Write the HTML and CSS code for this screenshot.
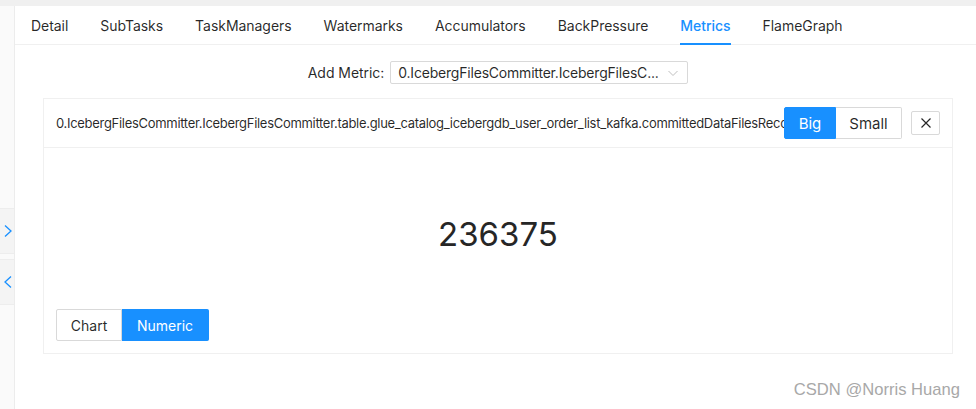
FILE: index.html
```html
<!DOCTYPE html>
<html>
<head>
<meta charset="utf-8">
<link rel="stylesheet" href="styles.css">
</head>
<body>
<div class="topbar"></div>
<div class="main">
  <aside class="sider">
    <div class="handle handle-first">
      <svg width="10" height="14" viewBox="0 0 10 14"><path d="M2 1.5 L8 7 L2 12.5" fill="none" stroke="#1890ff" stroke-width="1.3"/></svg>
    </div>
    <div class="handle">
      <svg width="10" height="14" viewBox="0 0 10 14"><path d="M8 1.5 L2 7 L8 12.5" fill="none" stroke="#1890ff" stroke-width="1.3"/></svg>
    </div>
  </aside>
  <section class="content">
    <nav class="tabs">
      <span class="tab">Detail</span>
      <span class="tab">SubTasks</span>
      <span class="tab">TaskManagers</span>
      <span class="tab">Watermarks</span>
      <span class="tab">Accumulators</span>
      <span class="tab">BackPressure</span>
      <span class="tab active">Metrics</span>
      <span class="tab">FlameGraph</span>
    </nav>
    <div class="panel">
      <div class="add-row">
        <span class="add-label">Add Metric:</span>
        <div class="select">
          <span class="select-value">0.IcebergFilesCommitter.IcebergFilesC...</span>
          <svg class="select-arrow" width="12" height="12" viewBox="0 0 12 12"><path d="M1.5 4 L6 8.5 L10.5 4" fill="none" stroke="#bfbfbf" stroke-width="1"/></svg>
        </div>
      </div>
      <div class="card">
        <div class="card-head">
          <div class="card-title">0.IcebergFilesCommitter.IcebergFilesCommitter.table.glue_catalog_icebergdb_user_order_list_kafka.committedDataFilesRecordCount</div>
          <div class="seg seg-lg">
            <span class="seg-btn on">Big</span>
            <span class="seg-btn">Small</span>
          </div>
          <button class="close-btn">
            <svg width="12" height="12" viewBox="0 0 12 12"><path d="M1.5 1.5 L10.5 10.5 M10.5 1.5 L1.5 10.5" stroke="#262626" stroke-width="1.2"/></svg>
          </button>
        </div>
        <div class="card-body">
          <div class="value">236375</div>
          <div class="seg">
            <span class="seg-btn wide-chart">Chart</span>
            <span class="seg-btn on wide-num">Numeric</span>
          </div>
        </div>
      </div>
    </div>
  </section>
</div>
<div class="watermark">CSDN @Norris Huang</div>
</body>
</html>
```

FILE: styles.css
```css
* { box-sizing: border-box; }
html, body { margin: 0; padding: 0; }
body {
  width: 976px;
  height: 409px;
  overflow: hidden;
  background: #fff;
  font-family: Inter, "Liberation Sans", sans-serif;
  color: rgba(0, 0, 0, 0.85);
  position: relative;
}
.topbar {
  height: 6px;
  background: #f0f0f0;
}
.main {
  display: flex;
  height: 403px;
}
.sider {
  width: 15px;
  flex: none;
  border-right: 1px solid #ececec;
  background: #fafafa;
  display: flex;
  flex-direction: column;
  gap: 5px;
}
.handle {
  width: 14px;
  height: 46px;
  background: #f4f4f4;
  border-top: 1px solid #ededed;
  border-bottom: 1px solid #ededed;
  display: flex;
  align-items: center;
  justify-content: flex-end;
  padding-right: 1px;
}
.handle-first { margin-top: 202px; }
.content {
  flex: 1;
  min-width: 0;
}
.tabs {
  display: flex;
  gap: 32px;
  padding-left: 16px;
  border-bottom: 1px solid #f0f0f0;
  height: 39px;
}
.tab {
  position: relative;
  font-size: 14px;
  line-height: 22px;
  padding-top: 9px;
  letter-spacing: -0.04px;
  color: rgba(0, 0, 0, 0.85);
  white-space: nowrap;
}
.tab.active {
  color: #1890ff;
  font-weight: 500;
}
.tab.active::after {
  content: "";
  position: absolute;
  left: 0;
  right: 0;
  bottom: -1px;
  height: 2px;
  background: #1890ff;
}
.panel {
  padding: 16px 23px 0 28px;
}
.add-row {
  display: flex;
  justify-content: center;
  align-items: center;
  gap: 6px;
  height: 23px;
}
.add-label {
  font-size: 14px;
  letter-spacing: -0.05px;
}
.select {
  width: 298px;
  height: 23px;
  border: 1px solid #d9d9d9;
  border-radius: 2px;
  display: flex;
  align-items: center;
  justify-content: space-between;
  padding: 0 8px 0 7px;
  font-size: 14px;
}
.select-value {
  white-space: nowrap;
  letter-spacing: -0.2px;
}
.card {
  margin-top: 14px;
  border: 1px solid #f0f0f0;
}
.card-head {
  height: 49px;
  border-bottom: 1px solid #f0f0f0;
  display: flex;
  align-items: center;
  padding: 0 12px;
}
.card-title {
  flex: 1;
  min-width: 0;
  overflow: hidden;
  white-space: nowrap;
  font-size: 13px;
  letter-spacing: -0.3px;
}
.seg {
  display: flex;
}
.seg-btn {
  display: flex;
  align-items: center;
  justify-content: center;
  height: 32px;
  font-size: 14px;
  border: 1px solid #d9d9d9;
  background: #fff;
  color: rgba(0, 0, 0, 0.85);
}
.seg-btn:first-child { border-radius: 2px 0 0 2px; }
.seg-btn:last-child { border-radius: 0 2px 2px 0; border-left: none; }
.seg-btn.on {
  background: #1890ff;
  border-color: #1890ff;
  color: #fff;
}
.seg-lg .seg-btn:first-child { width: 52px; font-size: 15px; }
.seg-lg .seg-btn:last-child { width: 66px; font-size: 15px; }
.close-btn {
  margin-left: 9px;
  width: 29px;
  height: 24px;
  border: 1px solid #d9d9d9;
  border-radius: 2px;
  background: #fff;
  display: flex;
  align-items: center;
  justify-content: center;
  padding: 0;
}
.card-body {
  padding: 12px;
}
.value {
  height: 149px;
  line-height: 149px;
  text-align: center;
  font-size: 33px;
  color: #262626;
}
.wide-chart { width: 66px; }
.wide-num { width: 87px; }
.watermark {
  position: absolute;
  right: 16px;
  bottom: 9px;
  font-family: "Liberation Sans", sans-serif;
  font-size: 16.6px;
  color: #a8a8a8;
}
```
